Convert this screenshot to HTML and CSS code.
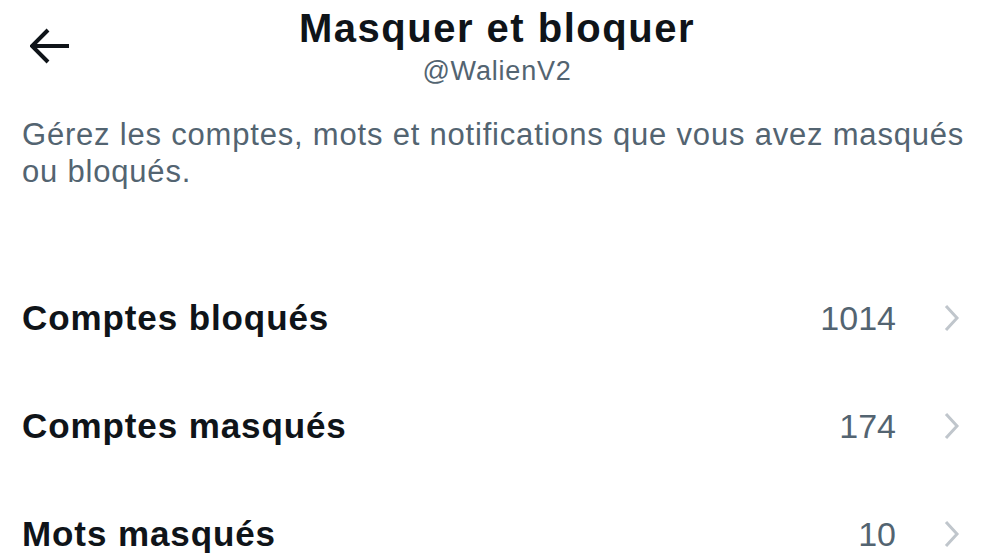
FILE: index.html
```html
<!DOCTYPE html>
<html lang="fr">
<head>
    <meta charset="utf-8">
    <meta name="viewport" content="width=device-width, initial-scale=1.0">
    <title>Masquer et bloquer</title>
    <link rel="stylesheet" href="styles.css">
</head>
<body>

    <div class="header">
        <a class="back" href="#">
            <svg width="40" height="36" viewBox="0 0 40 36">
                <path d="M2 18 H39 M18 2 L2 18 L18 34" fill="none" stroke="#0f1419" stroke-width="4" stroke-linejoin="miter"/>
            </svg>
        </a>
        <div class="title">
            <h1>Masquer et bloquer</h1>
            <div class="handle">@WalienV2</div>
        </div>
    </div>

    <p class="intro">Gérez les comptes, mots et notifications que vous avez masqués ou bloqués.</p>

    <div class="list">
        <a class="row" href="#">
            <span class="label">Comptes bloqués</span>
            <span class="count">1014</span>
            <svg class="chevron" width="16" height="28" viewBox="0 0 16 28"><path d="M2 2 L13 14 L2 26" fill="none" stroke="#c0c6cc" stroke-width="3"/></svg>
        </a>
        <a class="row" href="#">
            <span class="label">Comptes masqués</span>
            <span class="count">174</span>
            <svg class="chevron" width="16" height="28" viewBox="0 0 16 28"><path d="M2 2 L13 14 L2 26" fill="none" stroke="#c0c6cc" stroke-width="3"/></svg>
        </a>
        <a class="row" href="#">
            <span class="label">Mots masqués</span>
            <span class="count">10</span>
            <svg class="chevron" width="16" height="28" viewBox="0 0 16 28"><path d="M2 2 L13 14 L2 26" fill="none" stroke="#c0c6cc" stroke-width="3"/></svg>
        </a>
    </div>

</body>
</html>
```

FILE: styles.css
```css
* {
    margin: 0;
    padding: 0;
    box-sizing: border-box;
}
body {
    background: white;
    color: #0f1419;
    font-family: "Liberation Sans", Arial, sans-serif;
}
.header {
    position: relative;
    height: 100px;
    padding-top: 6px;
}
.back {
    position: absolute;
    left: 30px;
    top: 28px;
    display: block;
    line-height: 0;
}
.title {
    text-align: center;
}
h1 {
    font-size: 40px;
    font-weight: bold;
    line-height: 44px;
    letter-spacing: 1.5px;
}
.handle {
    color: #536471;
    font-size: 27px;
    line-height: 34px;
    letter-spacing: 0.8px;
    margin-top: 4px;
}
.intro {
    color: #536471;
    font-size: 31px;
    line-height: 37px;
    letter-spacing: 0.8px;
    padding: 16px 22px 0;
}
.list {
    margin-top: 74px;
}
.row {
    display: flex;
    align-items: center;
    height: 108px;
    padding: 0 34px 0 22px;
    text-decoration: none;
    color: #0f1419;
}
.label {
    flex: 1;
    font-size: 35px;
    font-weight: bold;
    letter-spacing: 0.9px;
}
.count {
    color: #536471;
    font-size: 34px;
    margin-right: 48px;
}
.chevron {
    display: block;
}
```
